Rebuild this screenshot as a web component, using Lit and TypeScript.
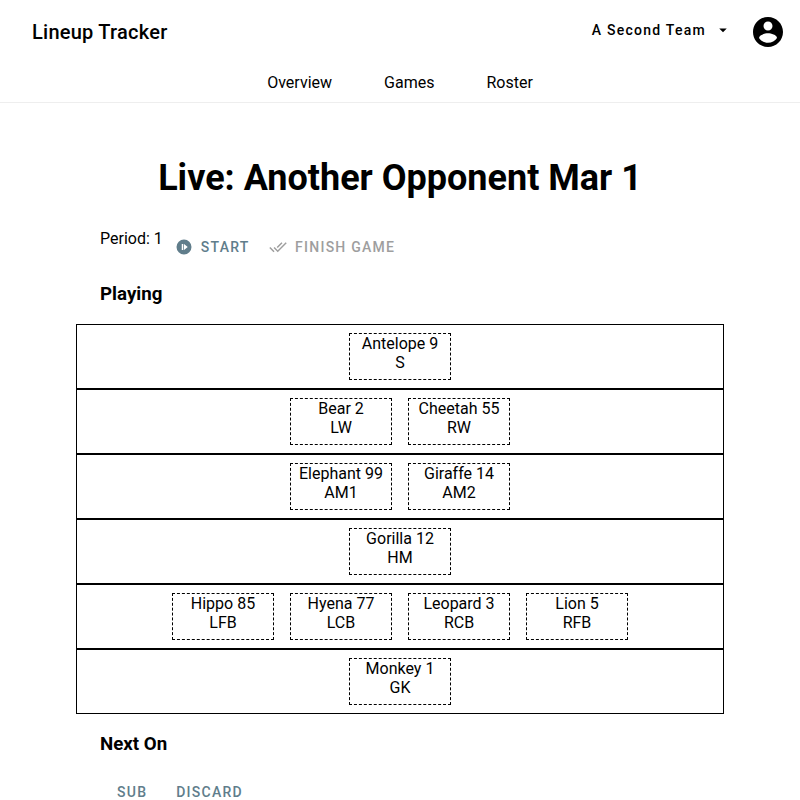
import { LitElement, html, css } from "lit";
import { customElement, property } from "lit/decorators.js";

interface Player {
  name: string;
  num: number;
  pos: string;
}

const p = (name: string, num: number, pos: string): Player => ({ name, num, pos });

const LINES: Player[][] = [
  [p("Antelope", 9, "S")],
  [p("Bear", 2, "LW"), p("Cheetah", 55, "RW")],
  [p("Elephant", 99, "AM1"), p("Giraffe", 14, "AM2")],
  [p("Gorilla", 12, "HM")],
  [p("Hippo", 85, "LFB"), p("Hyena", 77, "LCB"), p("Leopard", 3, "RCB"), p("Lion", 5, "RFB")],
  [p("Monkey", 1, "GK")],
];

@customElement("player-card")
export class PlayerCard extends LitElement {
  @property({ attribute: false }) player!: Player;

  static styles = css`
    :host {
      display: block;
      box-sizing: border-box;
      width: 102px;
      height: 47px;
      margin: 8px;
      border: 1px dashed #000;
      text-align: center;
      line-height: 19px;
      white-space: nowrap;
    }
  `;

  render() {
    return html`<div>${this.player.name} ${this.player.num}</div>
      <div>${this.player.pos}</div>`;
  }
}

@customElement("app-root")
export class AppRoot extends LitElement {
  static styles = css`
    :host {
      display: block;
      height: 800px;
      overflow: hidden;
      background: #fff;
      color: #000;
      font: 16px/19px Roboto, sans-serif;
    }
    header {
      border-bottom: 1px solid #eee;
      height: 102px;
    }
    .bar {
      display: flex;
      align-items: center;
      height: 64px;
      padding: 0 14px 0 32px;
    }
    .brand {
      flex: 1;
      font-size: 20px;
      font-weight: 500;
      letter-spacing: 0.25px;
      line-height: 32px;
    }
    .btn {
      display: flex;
      align-items: center;
      font-size: 14px;
      font-weight: 500;
      letter-spacing: 1.25px;
      line-height: 36px;
    }
    svg {
      display: block;
      fill: currentColor;
    }
    .team {
      margin: -4px 18px 0 0;
      gap: 8px;
    }
    nav {
      display: flex;
      justify-content: center;
      gap: 52px;
      padding-top: 9px;
    }
    h1 {
      margin: 54px 0 0;
      text-align: center;
      font-size: 36px;
      font-weight: 700;
      line-height: 43px;
    }
    .controls {
      display: flex;
      margin: 29px 0 0 100px;
      height: 36px;
    }
    .action {
      color: #607d8b;
    }
    .action svg {
      margin-right: 8px;
    }
    .start {
      margin-left: 12px;
    }
    .finish {
      margin-left: 19.5px;
      color: #9e9e9e;
    }
    h3 {
      margin: 18px 0 0 100px;
      font-size: 18.72px;
      font-weight: 700;
      line-height: 22px;
    }
    .field {
      margin: 19px 76px 0;
    }
    .line {
      display: flex;
      justify-content: center;
      border: 1px solid #000;
    }
    .next {
      margin-top: 19px;
    }
    .foot {
      display: flex;
      gap: 29px;
      margin: 19px 0 0 117px;
    }
  `;

  render() {
    return html`
      <header>
        <div class="bar">
          <div class="brand">Lineup Tracker</div>
          <div class="btn team">
            A Second Team
            <svg width="18" height="18" viewBox="0 0 24 24"><path d="M7 10l5 5 5-5z" /></svg>
          </div>
          <svg width="36" height="36" viewBox="0 0 24 24">
            <path d="M12 2C6.480 2 2 6.480 2 12s4.480 10 10 10 10-4.480 10-10S17.520 2 12 2zm0 3c1.660 0 3 1.340 3 3s-1.340 3-3 3-3-1.340-3-3 1.340-3 3-3zm0 14.200c-2.500 0-4.710-1.280-6-3.220.03-1.990 4-3.080 6-3.080 1.990 0 5.970 1.090 6 3.080-1.290 1.940-3.500 3.220-6 3.220z" />
          </svg>
        </div>
        <nav><span>Overview</span><span>Games</span><span>Roster</span></nav>
      </header>
      <h1>Live: Another Opponent Mar 1</h1>
      <div class="controls">
        <span>Period: 1</span>
        <div class="btn action start">
          <svg width="18" height="18" viewBox="0 0 24 24">
            <path fill-rule="evenodd" d="M12 2a10 10 0 1 0 0 20a10 10 0 1 0 0-20zM9 8h2v8H9zM12 8l5 4-5 4z" />
          </svg>
          START
        </div>
        <div class="btn action finish">
          <svg width="18" height="18" viewBox="0 0 24 24">
            <path d="M18 7l-1.410-1.410-6.340 6.340 1.410 1.410L18 7zm4.240-1.410L11.660 16.170 7.480 12l-1.410 1.410L11.660 19l12-12-1.420-1.410zM.41 13.410L6 19l1.410-1.410L1.830 12 .41 13.410z" />
          </svg>
          FINISH GAME
        </div>
      </div>
      <h3>Playing</h3>
      <div class="field">
        ${LINES.map(
          (line) => html`<div class="line">
            ${line.map((player) => html`<player-card .player=${player}></player-card>`)}
          </div>`
        )}
      </div>
      <h3 class="next">Next On</h3>
      <div class="btn action foot"><span>SUB</span><span>DISCARD</span></div>
    `;
  }
}
